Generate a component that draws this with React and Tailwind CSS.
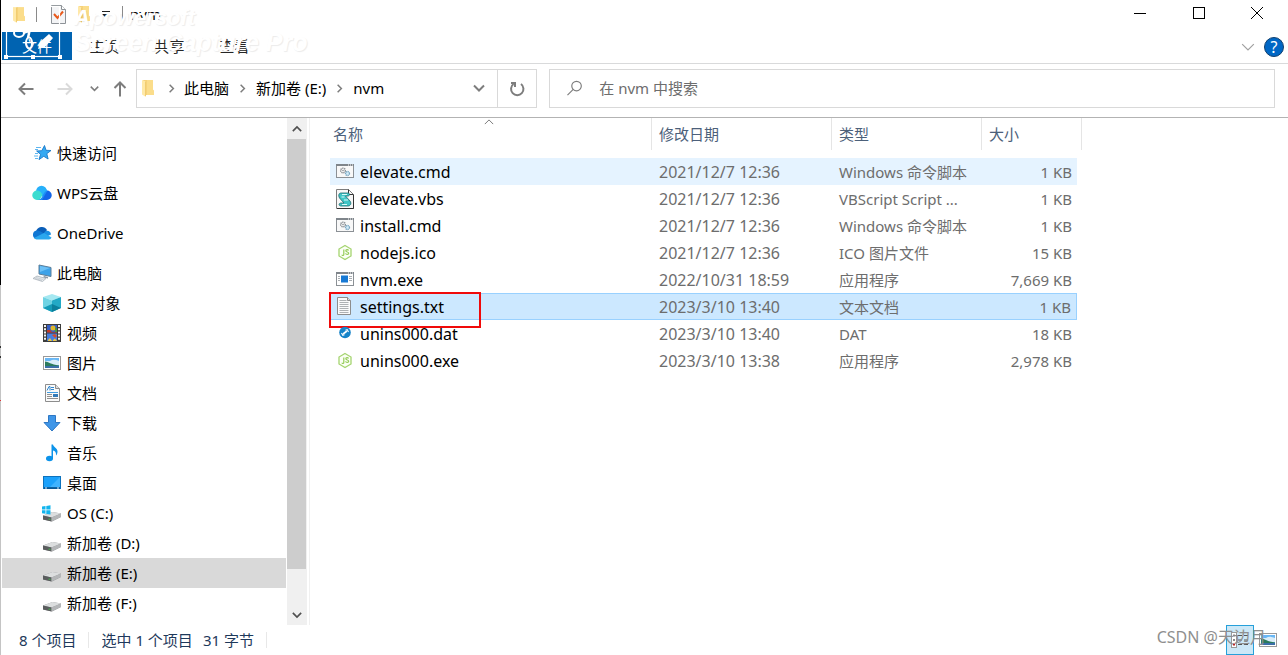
const NAV_GROUPS = [
  { name: '快速访问', icon: StarIcon },
  { name: 'WPS云盘', icon: WpsCloudIcon },
  { name: 'OneDrive', icon: OneDriveIcon },
  {
    name: '此电脑',
    icon: ComputerIcon,
    children: [
      { name: '3D 对象', icon: CubeIcon },
      { name: '视频', icon: VideoIcon },
      { name: '图片', icon: PictureIcon },
      { name: '文档', icon: DocumentIcon },
      { name: '下载', icon: DownloadIcon },
      { name: '音乐', icon: MusicIcon },
      { name: '桌面', icon: DesktopIcon },
      { name: 'OS (C:)', icon: SystemDriveIcon },
      { name: '新加卷 (D:)', icon: DriveIcon },
      { name: '新加卷 (E:)', icon: DriveIcon, active: true },
      { name: '新加卷 (F:)', icon: DriveIcon },
    ],
  },
];

const FILES = [
  { name: 'elevate.cmd', date: '2021/12/7 12:36', type: 'Windows 命令脚本', size: '1 KB', icon: CmdIcon, hovered: true },
  { name: 'elevate.vbs', date: '2021/12/7 12:36', type: 'VBScript Script ...', size: '1 KB', icon: ScriptIcon },
  { name: 'install.cmd', date: '2021/12/7 12:36', type: 'Windows 命令脚本', size: '1 KB', icon: CmdIcon },
  { name: 'nodejs.ico', date: '2021/12/7 12:36', type: 'ICO 图片文件', size: '15 KB', icon: NodeIcon },
  { name: 'nvm.exe', date: '2022/10/31 18:59', type: '应用程序', size: '7,669 KB', icon: ExeIcon },
  { name: 'settings.txt', date: '2023/3/10 13:40', type: '文本文档', size: '1 KB', icon: TextIcon, selected: true },
  { name: 'unins000.dat', date: '2023/3/10 13:40', type: 'DAT', size: '18 KB', icon: DatIcon },
  { name: 'unins000.exe', date: '2023/3/10 13:38', type: '应用程序', size: '2,978 KB', icon: NodeIcon },
];

/* ---------- icons ---------- */

function FolderIcon() {
  return (
    <svg width="12" height="18" viewBox="0 0 12 18" className="shrink-0">
      <path d="M1 1h10v10l1 1v4H3z" fill="#f6d27a" />
      <path d="M5 1h6v9.500l1 1.500v4H5z" fill="#fbdd8b" />
      <path d="M0 1l4 1.500V18L0 15.500z" fill="#ffe9a8" />
      <path d="M3.500 2.500V17" stroke="#edc563" strokeWidth="0.800" />
    </svg>
  );
}

function CheckDocIcon() {
  return (
    <svg width="15" height="19" viewBox="0 0 15 19" className="shrink-0">
      <path d="M.5.500h10l4 4v14H.500z" fill="#f3f4f6" stroke="#8d9297" />
      <path d="M10.500.500v4h4" fill="#fff" stroke="#8d9297" />
      <path d="M3 9l3.500 4L12 6.500" fill="none" stroke="#e8591c" strokeWidth="2" />
    </svg>
  );
}

function StarIcon() {
  return (
    <svg width="20" height="18" viewBox="0 0 20 18">
      <path d="M12.500 1.500l1.500 4.800 5 .2-4.200 3.200 1.300 5.300-4.300-2.700L7 15.600l1.600-5.300L4.600 7l5.200-.3z" fill="#35a9f2" stroke="#1878c8" strokeWidth="0.900" />
      <path d="M4 3.500h5M3 5.500h3M3 9.500h3M2 12h4M3 14.500h3" stroke="#5fb6ef" strokeWidth="1" />
    </svg>
  );
}

function WpsCloudIcon() {
  return (
    <svg width="20" height="16" viewBox="0 0 20 16">
      <path d="M4.500 6A5.600 5.600 0 0 1 15 5.500L10 11z" fill="#22b5fb" />
      <circle cx="9.500" cy="6" r="5.300" fill="#27b0fa" />
      <path d="M9 14l6-8.500A4.700 4.700 0 0 1 15 15H7z" fill="#1265e8" />
      <path d="M5 5.500c2.600 0 4.500 2 5.500 4.500l-3 5H5A4.700 4.700 0 0 1 5 5.500z" fill="#3bdcd0" />
      <path d="M6 15c5 0 5-9.500 9.500-9.500L10 15z" fill="#1d8df5" />
    </svg>
  );
}

function OneDriveIcon() {
  return (
    <svg width="20" height="14" viewBox="0 0 20 14">
      <path d="M4 5.500A6 6 0 0 1 15 4l-4 6z" fill="#0a5eb8" />
      <path d="M4.500 4.500a6 6 0 0 1 4 1L13 8l-9 5A4.400 4.400 0 0 1 4.500 4.500z" fill="#1077d3" />
      <path d="M12 7c2-3.500 6.500-2.500 7 1.500L14 11z" fill="#1b8fe2" />
      <path d="M2 12l10-5 7.500 4.500A3 3 0 0 1 17 13.500H4.500A4 4 0 0 1 2 12z" fill="#2aa7ee" />
    </svg>
  );
}

function ComputerIcon() {
  return (
    <svg width="20" height="18" viewBox="0 0 20 18">
      <path d="M7 1l12 2.500v9L7 10z" fill="#3da2e8" stroke="#5d7f99" strokeWidth="1" />
      <path d="M8 2l10 2-10 4z" fill="#6cc0f6" />
      <path d="M12 12l4 1v1.500l-5-1z" fill="#8f9ba5" />
      <path d="M5 12l9 2.500-3.500 3L1 14.500z" fill="#e6eaed" stroke="#aab3ba" strokeWidth="0.800" />
      <path d="M4 13.500l7.500 2.200M3 14.500l7 2" stroke="#b9c1c7" strokeWidth="0.600" />
    </svg>
  );
}

function CubeIcon() {
  return (
    <svg width="20" height="20" viewBox="0 0 20 20">
      <path d="M10 1l9 3-9 3.500L1 4z" fill="#a5e8f1" />
      <path d="M1 4l9 3.500V19l-9-4z" fill="#6fd3e3" />
      <path d="M19 4l-9 3.500V19l9-4z" fill="#22a9c6" />
      <path d="M1 15l9-4v8z" fill="#149bb8" />
      <path d="M19 15l-9-4v8z" fill="#0b7f9c" />
    </svg>
  );
}

function VideoIcon() {
  return (
    <svg width="20" height="20" viewBox="0 0 20 20">
      <rect x="1" y="1" width="18" height="18" fill="#3c3c3c" />
      <path d="M3 2v16M17 2v16" stroke="#f4f4f4" strokeWidth="2" strokeDasharray="2 1.200" />
      <rect x="5" y="2" width="10" height="7.500" fill="#385fc4" />
      <rect x="5" y="10.500" width="10" height="7.500" fill="#477fe0" />
      <circle cx="11" cy="5" r="2.500" fill="#e0b52e" />
      <path d="M5 7h3l2 2h5v.500H5z" fill="#c33a25" />
      <path d="M13 4l2 2v3h-2z" fill="#4b9a37" />
      <path d="M10 12l3-1 2 2-2 2z" fill="#d34d2c" />
      <path d="M6 17l2-2 2 3H6zM11 17l2-1.500 2 2.500h-4z" fill="#eac443" />
    </svg>
  );
}

function PictureIcon() {
  return (
    <svg width="20" height="16" viewBox="0 0 20 16" className="shrink-0">
      <rect x="1.500" y="1.500" width="17" height="13" fill="#fff" stroke="#999" />
      <rect x="3" y="3" width="14" height="10" fill="#69b7f5" />
      <path d="M8 6c3-2 6-1 9 0v4H3V6z" fill="#d9edf9" />
      <path d="M3 6.500c3 0 6 3 14 4V12H3z" fill="#2b7a5c" />
      <path d="M3 11h14v2H3z" fill="#3b6fa8" />
    </svg>
  );
}

function DocumentIcon() {
  return (
    <svg width="20" height="20" viewBox="0 0 20 20">
      <path d="M3.500 1.500h10l4 4v13h-14z" fill="#fafafa" stroke="#8d8d8d" />
      <path d="M13.500 1.500v4h4" fill="#ddd" stroke="#8d8d8d" />
      <path d="M5 7.500l2-4h1v4M9 4.500h3M9 6.500h3" fill="none" stroke="#2e86cf" strokeWidth="1" />
      <path d="M5 9.500h11" stroke="#3f9be0" />
      <path d="M5 11.500h5M5 13.500h5M5 15.500h11" stroke="#909090" />
      <rect x="11" y="11" width="5" height="3" fill="#337ab8" />
    </svg>
  );
}

function DownloadIcon() {
  return (
    <svg width="20" height="20" viewBox="0 0 20 20">
      <path d="M6.500 2.500h7v7h4.500L10 18 2 9.500h4.500z" fill="#3f96e8" stroke="#2d77c4" />
    </svg>
  );
}

function MusicIcon() {
  return (
    <svg width="20" height="20" viewBox="0 0 20 20">
      <ellipse cx="7.500" cy="15.500" rx="3.500" ry="2.700" fill="#0c93ea" />
      <path d="M9.500 1.500h1.500c.5 3 4.500 3.500 4.500 7 0 1.500-.5 3-1.500 4 .3-3-.8-4.500-3-5v8.500H9.500z" fill="#0c93ea" />
    </svg>
  );
}

function DesktopIcon() {
  return (
    <svg width="20" height="16" viewBox="0 0 20 16">
      <rect x="1.500" y="1.500" width="17" height="12" fill="#1ba1fb" stroke="#0d72bd" />
      <path d="M18 2v10H8z" fill="#3fb3ff" />
      <path d="M2 13h16" stroke="#084f87" strokeWidth="1.500" />
      <path d="M3 13h2M15 13h2" stroke="#d7efff" />
    </svg>
  );
}

function DriveShape() {
  return (
    <>
      <path d="M1 12.500L10.500 9 19 10.500v3.500L10 18.500l-9-2z" fill="#8f9294" />
      <path d="M1 12.500L10.500 9 19 10.500l-9.500 4z" fill="#dcdedf" />
      <path d="M1 12.500l8.500 2v4L1 16.500z" fill="#5a5d5e" />
      <path d="M9.500 14.500l9.500-4v3.500l-9.500 4.500z" fill="#b4b6b8" />
      <path d="M6.500 16l2 .5" stroke="#45b04e" strokeWidth="1.200" />
    </>
  );
}

function DriveIcon() {
  return (
    <svg width="20" height="20" viewBox="0 0 20 20">
      <DriveShape />
    </svg>
  );
}

function SystemDriveIcon() {
  return (
    <svg width="20" height="20" viewBox="0 0 20 20">
      <DriveShape />
      <path d="M0 3.500l3.500-.5v3.500H0zM4.300 2.900L8.500 2.300v4.200H4.300zM0 7.300h3.500v3.500L0 10.300zM4.300 7.300h4.200v4.200l-4.200-.6z" fill="#12b5ee" />
    </svg>
  );
}

function CmdIcon() {
  return (
    <svg width="20" height="20" viewBox="0 0 20 20">
      <rect x="1.500" y="2.500" width="17" height="13" fill="#f8f8f8" stroke="#8b9095" />
      <path d="M1 3h18" stroke="#7f858b" strokeWidth="2" />
      <path d="M13 3h1M15 3h1M17 3h1" stroke="#fff" />
      <circle cx="8" cy="8.500" r="2.300" fill="none" stroke="#8a8f94" strokeWidth="1.500" strokeDasharray="1.200 0.600" />
      <circle cx="12.500" cy="11.500" r="2" fill="#d4ecf8" stroke="#7aa7c2" strokeWidth="1.300" strokeDasharray="1.200 0.500" />
      <circle cx="8" cy="8.500" r="0.800" fill="#8a8f94" />
    </svg>
  );
}

function ScriptIcon() {
  return (
    <svg width="20" height="20" viewBox="0 0 20 20">
      <path d="M1.500.500h12l5 5v14h-17z" fill="#f7f7f7" stroke="#7c7c7c" />
      <path d="M13.500.500v5h5M18.500 6v13.500H2" fill="none" stroke="#333" />
      <path d="M6 4h7c2 0 2 3 0 3h-2.500l4.500 5c2 3 0 5-2 5H6c-2.500 0-2.500-3 0-3h3L4.500 9C3 6 4 4 6 4z" fill="#3fc5c6" stroke="#216b70" strokeWidth="0.800" />
      <path d="M7 5.500h5M6.500 8h3M9 11h4M7 15.500h5" stroke="#d8fafa" />
    </svg>
  );
}

function NodeIcon() {
  return (
    <svg width="20" height="20" viewBox="0 0 20 20">
      <path d="M10 2.500l6 3.500v7l-6 3.500L4 13V6z" fill="#fbfff6" stroke="#a5d470" strokeWidth="1.300" />
      <path d="M8.800 6.500v5c0 1.300-1.800 1.300-1.800.2M13.500 7.500c-.5-1.200-2.700-1-2.700.3 0 1.600 2.900.8 2.900 2.400 0 1.500-2.700 1.500-3.200.2" fill="none" stroke="#95cc58" strokeWidth="1.200" />
    </svg>
  );
}

function ExeIcon() {
  return (
    <svg width="20" height="20" viewBox="0 0 20 20">
      <rect x="1.500" y="2.500" width="17" height="13" fill="#fff" stroke="#8b9095" />
      <path d="M1 3h18" stroke="#7f858b" strokeWidth="2" />
      <path d="M13 3h1M15 3h1M17 3h1" stroke="#fff" />
      <rect x="6" y="5.500" width="7" height="7" fill="#1779d4" />
      <path d="M3 6.500h2M3 8.500h2M3 10.500h2M14 6.500h3M14 8.500h3M14 10.500h3" stroke="#a8adb2" />
    </svg>
  );
}

function TextIcon() {
  return (
    <svg width="20" height="20" viewBox="0 0 20 20">
      <path d="M2.500.500h10l3 3v14h-13z" fill="#fafafa" stroke="#8d8d8d" />
      <path d="M12.500.500v3h3" fill="#ddd" stroke="#8d8d8d" />
      <path d="M4.500 3.500h7M4.500 5.500h9M4.500 7.500h9M4.500 9.500h9M4.500 11.500h9M4.500 13.500h9M4.500 15.500h9" stroke="#aeb1b3" />
    </svg>
  );
}

function DatIcon() {
  return (
    <svg width="20" height="20" viewBox="0 0 20 20">
      <circle cx="10" cy="8.500" r="5.800" fill="#1683c8" />
      <path d="M8 10l4-3" stroke="#fff" strokeWidth="1.600" />
      <path d="M6.500 9l1.300 2.300 1.700-.6M10.500 6.300l1.700-.7 1.300 2.300" fill="none" stroke="#fff" strokeWidth="1.100" />
    </svg>
  );
}

function DetailsIcon() {
  return (
    <svg width="20" height="18" viewBox="0 0 20 18">
      <rect x="1.500" y="1.500" width="5" height="15" fill="#fff" stroke="#999" />
      <path d="M3 4.500h2M3 9h2" stroke="#8a8a8a" strokeWidth="2" />
      <path d="M3 13.500h2" stroke="#b22" strokeWidth="2" />
      <path d="M8 4.500h4M14 4.500h4M8 9h4M14 9h4M8 13.500h4M14 13.500h4" stroke="#555" />
    </svg>
  );
}

function Chevron({ className, size = 12, width = 2 }) {
  return (
    <svg width={size} height={size} viewBox="0 0 12 12" fill="none" stroke="currentColor" strokeWidth={width} className={className}>
      <path d="M1 3.500l5 5 5-5" />
    </svg>
  );
}

function Arrow({ className }) {
  return (
    <svg width="16" height="16" viewBox="0 0 16 16" fill="none" stroke="currentColor" strokeWidth="2" className={className}>
      <path d="M15.500 8H1.500M7 2.500L1.500 8 7 13.500" />
    </svg>
  );
}

/* ---------- window parts ---------- */

function TitleBar() {
  return (
    <header className="flex h-8 items-start justify-between">
      <div className="flex h-7 items-center pl-3">
        <FolderIcon />
        <span className="ml-[11px] h-4 w-px bg-[#8a8a8a]" />
        <button type="button" aria-label="属性" className="ml-[14px]">
          <CheckDocIcon />
        </button>
        <button type="button" aria-label="新建文件夹" className="ml-3">
          <FolderIcon />
        </button>
        <button type="button" aria-label="自定义快速访问工具栏" className="ml-3">
          <svg width="8" height="8" viewBox="0 0 8 8">
            <path d="M0 1.500h8" stroke="#222" />
            <path d="M0 4h8L4 8z" fill="#222" />
          </svg>
        </button>
        <span className="ml-3 h-4 w-px bg-[#8a8a8a]" />
        <h1 className="ml-[7px] leading-5">nvm</h1>
      </div>
      <div className="flex pr-[2px]">
        <button type="button" aria-label="最小化" className="flex h-[26px] w-[58px] items-center justify-center">
          <span className="h-px w-3 bg-black" />
        </button>
        <button type="button" aria-label="最大化" className="flex h-[26px] w-[59px] items-center justify-center">
          <span className="size-3 border border-black" />
        </button>
        <button type="button" aria-label="关闭" className="flex h-[26px] w-[58px] items-center justify-center">
          <svg width="12" height="12" viewBox="0 0 12 12" stroke="#000">
            <path d="M0 0l12 12M12 0L0 12" />
          </svg>
        </button>
      </div>
    </header>
  );
}

function RibbonTabs() {
  return (
    <div className="flex h-8 items-start justify-between border-b border-[#d9dadb] pl-px">
      <nav className="flex">
        <button type="button" className="h-7 w-[70px] bg-[#0063b1] text-white">文件</button>
        <button type="button" className="h-7 w-[65px] text-[#262626]">主页</button>
        <button type="button" className="h-7 w-[65px] text-[#262626]">共享</button>
        <button type="button" className="h-7 w-[65px] text-[#262626]">查看</button>
      </nav>
      <div className="flex h-[30px] items-center gap-[9px] pr-1">
        <button type="button" aria-label="展开功能区" className="text-[#a0a0a0]">
          <Chevron size={14} width={1} />
        </button>
        <button type="button" aria-label="帮助" className="flex size-5 items-center justify-center rounded-full border border-[#12406e] bg-[#0067c5] text-base leading-4 text-white">
          ?
        </button>
      </div>
    </div>
  );
}

function AddressBar() {
  return (
    <div className="flex h-[54px] items-center border-b border-[#b3b3b3] pr-[13px] pb-2 pt-1 text-[#7d7d7d]">
      <button type="button" aria-label="后退" className="ml-[17px]">
        <Arrow />
      </button>
      <button type="button" aria-label="前进" className="ml-[23px] text-[#dadada]">
        <Arrow className="rotate-180" />
      </button>
      <button type="button" aria-label="最近浏览的位置" className="ml-[17px]">
        <Chevron size={9} width={2} />
      </button>
      <button type="button" aria-label="向上" className="ml-[13px]">
        <Arrow className="rotate-90" />
      </button>
      <div className="ml-2 flex h-[39px] w-[401px] border border-[#d9d9d9]">
        <div className="flex flex-1 items-center pb-px pl-[5px] text-black">
          <FolderIcon />
          <Chevron size={9} width={2} className="ml-[13px] mr-2 -rotate-90 text-[#7d7d7d]" />
          <a href="#pc">此电脑</a>
          <Chevron size={9} width={2} className="mx-[9px] -rotate-90 text-[#7d7d7d]" />
          <a href="#e">新加卷 (E:)</a>
          <Chevron size={9} width={2} className="mx-[9px] -rotate-90 text-[#7d7d7d]" />
          <a href="#nvm">nvm</a>
          <button type="button" aria-label="以前的位置" className="ml-auto mr-3 text-[#7d7d7d]">
            <Chevron size={12} width={2} />
          </button>
        </div>
        <button type="button" aria-label="刷新" className="flex w-[39px] items-center justify-center border-l border-[#d9d9d9]">
          <svg width="16" height="16" viewBox="0 0 16 16" fill="none" stroke="currentColor" strokeWidth="2">
            <path d="M12 3A6.200 6.200 0 1 1 4.500 3" />
            <path d="M2 2h4v4" />
          </svg>
        </button>
      </div>
      <label className="ml-3 flex h-[39px] flex-1 items-center border border-[#d9d9d9] pb-px pl-[17px]">
        <svg width="16" height="16" viewBox="0 0 16 16" fill="none" stroke="currentColor" strokeWidth="1.200">
          <circle cx="10" cy="6" r="5" />
          <path d="M6.500 9.500L.5 15.500" />
        </svg>
        <input
          type="text"
          aria-label="搜索"
          placeholder="在 nvm 中搜索"
          className="ml-[17px] w-full min-w-0 outline-none placeholder:text-[#6d6d6d]"
        />
      </label>
    </div>
  );
}

function NavItem({ item, child }) {
  const Icon = item.icon;
  return (
    <a
      href="#item"
      className={`flex h-[30px] items-center gap-[5px] text-black ${child ? 'pl-10' : 'pl-[30px]'} ${item.active ? 'bg-[#d9d9d9]' : ''}`}
    >
      <span className="flex w-5 justify-center">
        <Icon />
      </span>
      {item.name}
    </a>
  );
}

function Sidebar() {
  return (
    <aside className="flex w-[309px] shrink-0 border-r border-[#f0f0f0] pl-px">
      <nav className="flex flex-1 flex-col gap-[10px] pb-[7px] pt-5">
        {NAV_GROUPS.map((group) => (
          <div key={group.name}>
            <NavItem item={group} />
            {group.children?.map((item) => (
              <NavItem key={item.name} item={item} child />
            ))}
          </div>
        ))}
      </nav>
      <div className="ml-px mr-[2px] flex w-5 flex-col bg-[#f0f0f0] text-[#505050]">
        <button type="button" aria-label="向上滚动" className="flex h-[21px] items-center justify-center">
          <Chevron size={10} width={2} className="rotate-180" />
        </button>
        <div className="mr-px h-[430px] bg-[#cdcdcd]" />
        <button type="button" aria-label="向下滚动" className="mt-auto flex h-[21px] items-center justify-center">
          <Chevron size={10} width={2} />
        </button>
      </div>
    </aside>
  );
}

function rowStyle(file) {
  if (file.selected) return 'border-y border-[#99d1ff] bg-[#cce8ff]';
  if (file.hovered) return 'bg-[#e5f3ff]';
  return '';
}

function FileTable() {
  const head = 'border-r border-[#e5e5e5] px-[7px] text-left font-normal';
  return (
    <main className="min-w-0 flex-1 pl-5">
      <table className="w-[752px] table-fixed border-separate border-spacing-0">
        <colgroup>
          <col className="w-[322px]" />
          <col className="w-[180px]" />
          <col className="w-[150px]" />
          <col className="w-[100px]" />
        </colgroup>
        <thead>
          <tr className="h-8 text-[#4c607a]">
            <th className={`relative ${head} pl-[3px]`}>
              名称
              <Chevron size={10} width={1} className="absolute -top-px left-[154px] rotate-180 text-[#606060]" />
            </th>
            <th className={head}>修改日期</th>
            <th className={head}>类型</th>
            <th className={head}>大小</th>
          </tr>
        </thead>
        <tbody className="text-[#6d6d6d]">
          <tr className="h-2">
            <td colSpan={4} />
          </tr>
          {FILES.map((file) => {
            const Icon = file.icon;
            const bg = rowStyle(file);
            return (
              <tr key={file.name} className="h-[27px]">
                <td className={`relative p-0 text-base leading-5 text-black ${bg}`}>
                  <span className="flex items-center gap-[5px] pl-[5px]">
                    <Icon />
                    {file.name}
                  </span>
                  {file.selected && (
                    <span className="absolute -left-px -top-[2px] h-9 w-[152px] border-2 border-[#f00a0a]" />
                  )}
                </td>
                <td className={`px-[7px] py-0 text-base leading-5 ${bg}`}>{file.date}</td>
                <td className={`whitespace-nowrap px-[7px] py-0 leading-5 ${bg}`}>{file.type}</td>
                <td className="p-0 pr-[5px]">
                  <div className={`flex h-[27px] items-center justify-end pr-[5px] leading-5 ${bg} ${file.selected ? 'border-r' : ''}`}>
                    {file.size}
                  </div>
                </td>
              </tr>
            );
          })}
        </tbody>
      </table>
    </main>
  );
}

function StatusBar() {
  return (
    <footer className="flex h-[30px] items-center text-[#1e395b]">
      <span className="ml-[18px]">8 个项目</span>
      <span className="ml-3 h-4 w-px bg-[#e8e8e8]" />
      <span className="ml-3">选中 1 个项目</span>
      <span className="ml-[10px]">31 字节</span>
      <span className="ml-3 h-4 w-px bg-[#e8e8e8]" />
      <div className="relative ml-auto flex items-center gap-1 pr-[10px]">
        <button type="button" aria-label="详细信息" className="flex h-[30px] w-7 items-center justify-center border border-[#26a0da] bg-[#cce8f7]">
          <DetailsIcon />
        </button>
        <button type="button" aria-label="大图标">
          <PictureIcon />
        </button>
        <span className="pointer-events-none absolute right-[22px] top-[2px] whitespace-nowrap text-base leading-5 text-[#8f8f8f]">CSDN @天边月</span>
      </div>
    </footer>
  );
}

function CaptureMark() {
  return (
    <div className="pointer-events-none absolute left-1 top-1 flex gap-[10px] font-['Liberation_Sans',sans-serif] font-bold italic text-white">
      <svg width="60" height="56" viewBox="0 0 60 56" fill="none" stroke="#fff">
        <rect x="2.500" y="2.500" width="53" height="50" strokeWidth="1.200" />
        <path d="M0 51h4v4H0zM27 51h4v4h-4zM54 51h4v4h-4z" fill="#fff" stroke="none" />
        <ellipse cx="15" cy="29" rx="5" ry="4" strokeWidth="2" />
        <ellipse cx="25" cy="39" rx="3" ry="5.500" strokeWidth="2" />
        <path d="M19 29l24-9M24 34l5-24" strokeWidth="2.500" />
        <path d="M34 45l2-7 9-8 4 4-8 9z" fill="#fff" stroke="none" />
      </svg>
      <div className="text-shadow-[1px_1px_1px_rgb(0_0_0/0.08)]">
        <p className="text-[22px] leading-7">Apowersoft</p>
        <p className="whitespace-nowrap text-[25px] leading-5">Screen Capture Pro</p>
      </div>
    </div>
  );
}

export default function App() {
  return (
    <div className="relative flex min-h-screen overflow-hidden bg-white font-['Noto_Sans','Noto_Sans_CJK_SC',sans-serif] text-[15px] leading-5">
      <div className="w-px shrink-0 bg-[linear-gradient(#000_285px,#c4c4c4_285px,#c4c4c4_346px,#333_346px,#333_348px,#c4c4c4_348px,#c4c4c4_356px,#333_356px,#333_358px,#c4c4c4_358px,#c4c4c4_400px,#d33_400px,#d33_401px,#c4c4c4_401px)]" />
      <div className="flex min-w-0 flex-1 flex-col">
        <TitleBar />
        <RibbonTabs />
        <AddressBar />
        <div className="flex flex-1">
          <Sidebar />
          <FileTable />
        </div>
        <StatusBar />
      </div>
      <CaptureMark />
    </div>
  );
}
